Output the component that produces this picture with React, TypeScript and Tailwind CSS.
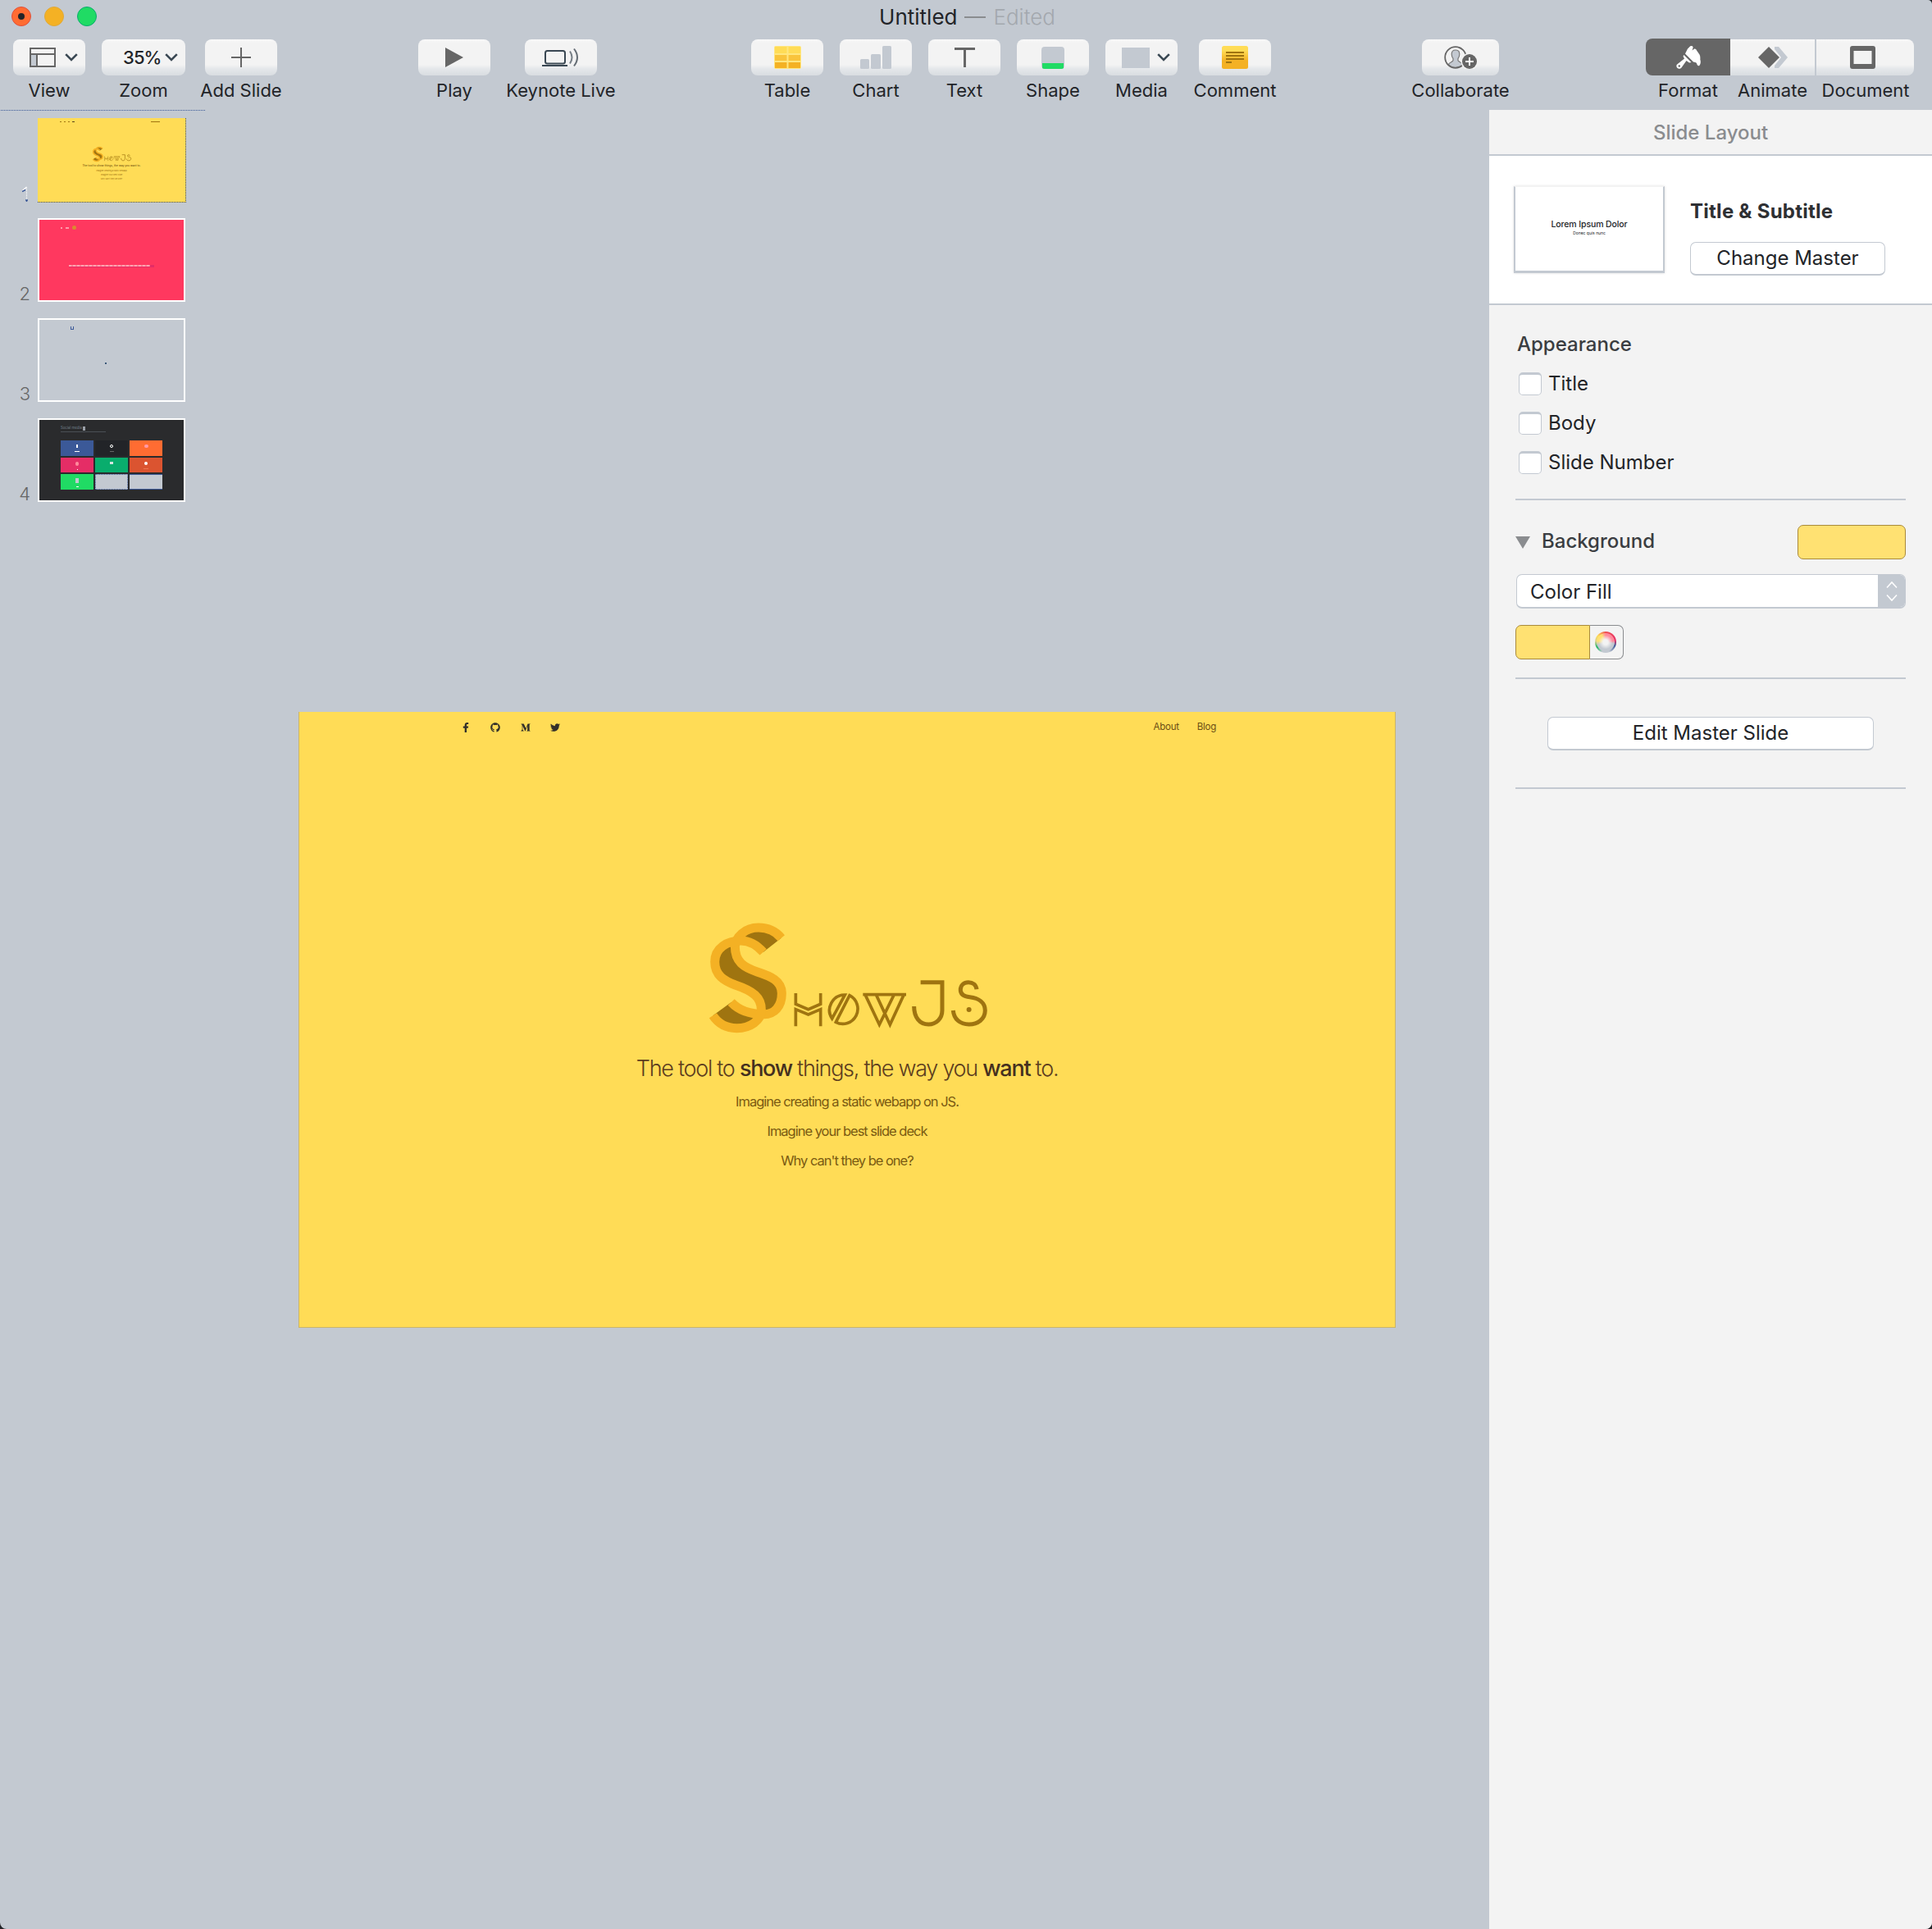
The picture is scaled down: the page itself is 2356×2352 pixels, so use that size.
import React from "react";
import { FaFacebookF, FaGithub, FaMediumM, FaTwitter } from "react-icons/fa";

const face =
  "bg-[linear-gradient(to_bottom,#f9f9f9_0px,#f3f3f3_4px,#f3f3f3_31px,#e4e7ea_36px,#d9dde1_44px)]";

function Tool({
  label,
  box,
  gap,
  children,
}: {
  label: string;
  box: string;
  gap: string;
  children: React.ReactNode;
}) {
  return (
    <div className={`flex shrink-0 flex-col items-center ${box} ${gap}`}>
      <div className={`flex h-11 w-full items-center justify-center rounded-[8px] ${face}`}>{children}</div>
      <div className="mt-1 h-[28px] text-[22px] leading-[28px] whitespace-nowrap text-[#222428]">{label}</div>
    </div>
  );
}

function Caret() {
  return (
    <svg width="16" height="10" viewBox="0 0 16 10" fill="none" stroke="#3a4853" strokeWidth="2.6">
      <path d="M1.2 1.2 8 8l6.8-6.8" />
    </svg>
  );
}

function Toolbar() {
  return (
    <div className="flex h-[94px] pt-2">
      <Tool label="View" box="w-[88px]" gap="ml-4">
        <div className="flex w-full items-center gap-[11px] pl-5">
          <svg width="32" height="24" viewBox="0 0 32 24">
            <rect x="1" y="8" width="8" height="15" fill="#c3c9d1" />
            <path d="M1 1h30v22H1zM1 8h30M9 8v15" fill="none" stroke="#666" strokeWidth="2" />
          </svg>
          <Caret />
        </div>
      </Tool>
      <Tool label="Zoom" box="w-[102px]" gap="ml-5">
        <div className="flex w-full items-center gap-[4px] pl-[26px] text-[22px] font-medium tracking-[-0.900px] text-[#222428]">
          35% <Caret />
        </div>
      </Tool>
      <Tool label="Add Slide" box="w-[88px]" gap="ml-6">
        <svg width="24" height="24" viewBox="0 0 24 24" stroke="#666" strokeWidth="2">
          <path d="M12 0v24M0 12h24" />
        </svg>
      </Tool>
      <Tool label="Play" box="w-[88px]" gap="ml-[172px]">
        <svg width="22" height="24" viewBox="0 0 22 24" fill="#666">
          <path d="M0 0l22 12L0 24z" />
        </svg>
      </Tool>
      <Tool label="Keynote Live" box="w-[88px]" gap="ml-[42px]">
        <svg width="46" height="24" viewBox="0 0 46 24" fill="none" stroke="#3a4853" strokeWidth="2">
          <rect x="4" y="4" width="24" height="15.500" rx="2.500" />
          <path d="M0 22h31" />
          <path d="M34 4.500q5 7.500 0 15" stroke="#777f87" />
          <path d="M39 1.500q8 10.500 0 21" stroke="#666e76" />
        </svg>
      </Tool>
      <Tool label="Table" box="w-[88px]" gap="ml-[188px]">
        <svg width="33" height="28" viewBox="0 0 33 28">
          <rect width="33" height="28" rx="2" fill="#ffe680" />
          <path d="M1 1h14.500v8H1zM17.500 1H32v8H17.500z" fill="#ffdc56" />
          <path d="M1 11h14.500v7H1zM17.500 11H32v7H17.500z" fill="#f9c43c" />
          <path d="M1 20h14.500v7H1zM17.500 20H32v7H17.500z" fill="#f4b124" />
        </svg>
      </Tool>
      <Tool label="Chart" box="w-[88px]" gap="ml-5">
        <svg width="38" height="28" viewBox="0 0 38 28" fill="#c3c9d1">
          <rect x="0" y="16" width="11" height="12" rx="1.500" />
          <rect x="13" y="10" width="12" height="18" rx="1.500" />
          <rect x="27" y="0" width="11" height="28" rx="1.500" />
        </svg>
      </Tool>
      <Tool label="Text" box="w-[88px]" gap="ml-5">
        <svg width="25" height="24" viewBox="0 0 25 24" stroke="#666" strokeWidth="3">
          <path d="M0 1.500h25M12.500 0v24" />
        </svg>
      </Tool>
      <Tool label="Shape" box="w-[88px]" gap="ml-5">
        <div className="flex h-[27px] w-[28px] flex-col justify-end overflow-hidden rounded-[4px] bg-[#c3c9d1] px-px">
          <div className="h-[7px] bg-[#20db64]" />
        </div>
      </Tool>
      <Tool label="Media" box="w-[88px]" gap="ml-5">
        <div className="flex w-full items-center gap-[9px] pl-5">
          <div className="h-[25px] w-[34px] bg-[#c3c9d1]" />
          <Caret />
        </div>
      </Tool>
      <Tool label="Comment" box="w-[88px]" gap="ml-[26px]">
        <svg width="32" height="28" viewBox="0 0 32 28">
          <defs>
            <linearGradient id="note" x1="0" y1="0" x2="0" y2="1">
              <stop offset="0.2" stopColor="#ffdc56" />
              <stop offset="0.65" stopColor="#f4b124" />
            </linearGradient>
          </defs>
          <rect width="32" height="28" rx="2.500" fill="url(#note)" />
          <path d="M5 8h22M5 12h22M5 16h22M5 20h7" stroke="#9f7410" strokeWidth="2" />
        </svg>
      </Tool>
      <Tool label="Collaborate" box="w-[94px]" gap="ml-[184px]">
        <svg width="40" height="28" viewBox="0 0 40 28">
          <path
            d="M14 5c-3 0-4.800 2-4.800 5 0 2.500.8 4 1.800 5.300v2.500C10 20 6 20 5.500 22.500c4 5 13 5 17 0C22 20 18 20 17 17.800v-2.500c1-1.300 1.800-2.800 1.800-5.300 0-3-1.800-5-4.800-5z"
            fill="#c3c9d1"
            stroke="#777"
            strokeWidth="1.200"
          />
          <circle cx="14" cy="14" r="12.800" fill="none" stroke="#666" strokeWidth="1.800" />
          <circle cx="31" cy="19" r="10.500" fill="#f3f3f3" />
          <circle cx="31" cy="19" r="9" fill="#666" />
          <path d="M31 14v10M26 19h10" stroke="#fff" strokeWidth="2" />
        </svg>
      </Tool>
      <div className="ml-[179px] flex">
        <Segment label="Format" box="w-[103px]" look="-mt-px h-[45px] rounded-l-[8px] bg-[#666]">
          <svg width="30" height="28" viewBox="0 0 30 28" fill="#fff">
            <path d="M17 0.500c2-1 4 0 3.500 2l-1 3 2-1.500c1.500-1 3 0 3.500 1.500l3.500 5c1 2 1 4 .8 6 1 3 .5 6-1 7.500-1.500 1-3-1-3.300-3l-1.500-1-2.500-.5L11 9.500c1-2 2-4 3-6z" />
            <path d="M9.500 11l9 9-2.500.5-3.500-2.500-6 8.500C5 28.300 2.500 28 1.300 26.800 0 25.300 0 23 1.800 22L10 15.500 8.500 12.500z" />
            <circle cx="3.800" cy="24.500" r="1.200" fill="#666" />
          </svg>
        </Segment>
        <Segment label="Animate" box="w-[103px]" look={`h-11 ${face}`}>
          <svg width="36" height="28" viewBox="0 0 36 28">
            <path d="M20 1h5l11 13-11 13h-5l0-3 8-10-8-10z" fill="#c3c9d1" />
            <path d="M13 1l13 13-13 13L0 14z" fill="#666" />
          </svg>
        </Segment>
        <Segment
          label="Document"
          box="w-[121px]"
          look={`h-11 rounded-r-[8px] border-l-2 border-[#c3c9d1] pr-[6px] ${face}`}
          shift="pl-[3px]"
        >
          <svg width="31" height="28" viewBox="0 0 31 28">
            <path
              fillRule="evenodd"
              fill="#666"
              d="M3 0h25a3 3 0 0 1 3 3v22a3 3 0 0 1-3 3H3a3 3 0 0 1-3-3V3a3 3 0 0 1 3-3zM4.500 6v16h22V6z"
            />
          </svg>
        </Segment>
      </div>
    </div>
  );
}

function Segment({
  label,
  box,
  look,
  shift = "",
  children,
}: {
  label: string;
  box: string;
  look: string;
  shift?: string;
  children: React.ReactNode;
}) {
  return (
    <div className={`flex flex-col items-center ${box}`}>
      <div className={`flex w-full items-center justify-center ${look}`}>{children}</div>
      <div className={`mt-1 h-[28px] text-[22px] leading-[28px] whitespace-nowrap text-[#222428] ${shift}`}>{label}</div>
    </div>
  );
}

function Logo({ className }: { className: string }) {
  return (
    <svg className={className} viewBox="60 60 1050 430" fill="none">
      <path
        fill="#9f7410"
        d="M272 180C250 155 225 138 190 138 140 138 95 165 95 215 95 265 130 285 170 300 235 322 265 345 265 390 265 430 225 458 175 458 140 458 110 445 88 412L155 363C180 390 215 407 275 407 312 407 340 380 340 330 340 285 300 268 250 252 200 235 169 215 169 160 170 125 205 90 255 90 290 90 315 100 338 128Z"
      />
      <g stroke="#f4b124" strokeWidth="33">
        <path d="M338 128C315 100 290 90 255 90 205 90 170 125 169 160 169 215 200 235 250 252 300 268 340 285 340 330 340 380 312 407 275 407 215 407 180 390 155 363" />
        <path d="M272 180C250 155 225 138 190 138 140 138 95 165 95 215 95 265 130 285 170 300 235 322 265 345 265 390 265 430 225 458 175 458 140 458 110 445 88 412" />
      </g>
      <g stroke="#9f7410" strokeWidth="11">
        <path d="M391 330v40l46 19 45-19v-40M391 451v-62l46 19 45-19v62" />
        <path d="M571 336A56 56 0 0 0 524 423ZM588 338A55 55 0 1 1 538 436Z" />
        <path d="M637 335h158M645 335l52 110 54-110M685 335l51 110 51-110" />
      </g>
      <g stroke="#9f7410" strokeWidth="15">
        <path d="M848 290h79v103c0 30-22 51-50 51-32 0-53-25-53-66" />
        <path d="M1053 316c-2-17-14-26-30-26-17 0-29 11-29 28 0 17 14 24 34 26 34 4 56 21 56 49 0 32-27 51-59 51-33 0-55-19-58-51" />
      </g>
      <circle cx="1025" cy="390" r="9" fill="#9f7410" />
    </svg>
  );
}

function Row({ n, children }: { n: string; children: React.ReactNode }) {
  return (
    <div className="flex h-[102px] items-end">
      <div className="w-[37px] text-right text-[22px] leading-[20px] font-light text-[#666]">{n}</div>
      <div className="ml-[9px] h-[102px] w-[180px]">{children}</div>
    </div>
  );
}

const tiles = [
  { bg: "bg-[#3b5998]", mark: "h-[4px] w-[2px] bg-white", line: "w-[6px] bg-white" },
  { bg: "bg-[#222428]", mark: "h-[4px] w-[4px] rounded-full border border-white", line: "w-[5px] bg-[#666]" },
  { bg: "bg-[#ff6c32]", mark: "h-[4px] w-[5px] rounded-full bg-[#ff9aa8]", line: "w-0" },
  { bg: "bg-[#e52d66]", mark: "h-[5px] w-[4px] rounded-full bg-[#ff8a9c]", line: "w-[1px] bg-white" },
  { bg: "bg-[#09ad6d]", mark: "h-[3px] w-[4px] bg-[#d5e5e0]", line: "w-0" },
  { bg: "bg-[#db5430]", mark: "h-[4px] w-[4px] rounded-full bg-white", line: "w-[6px] bg-[#ee7550]" },
  { bg: "bg-[#20db64]", mark: "h-[6px] w-[4px] bg-[#c3c9d1]", line: "w-[3px] bg-white" },
  { bg: "bg-[#c3c9d1] border border-dotted border-[#3b5998]", mark: "", line: "w-0" },
  { bg: "bg-[#c3c9d1] border-y border-[#3b5998]", mark: "", line: "w-0" },
];

function Sidebar() {
  return (
    <div className="w-[250px] shrink-0">
      <div className="h-px bg-[repeating-linear-gradient(90deg,transparent_0px,transparent_1px,#3b5998_1px,#3b5998_2px)]" />
      <div className="flex flex-col gap-5 pt-[9px]">
        <div className="flex h-[102px] items-end">
          <div className="flex w-[37px] flex-col items-end pr-[3px]">
            <svg width="7" height="19" viewBox="0 0 7 19" fill="none">
              <path d="M0.500 5.500L5.500 1" stroke="#fff" strokeWidth="1.500" />
              <path d="M5.500 1v15" stroke="#fff" strokeWidth="1.200" strokeDasharray="1 1" />
              <path d="M0 6.500l4-2M4 17h3M5.500 17v2" stroke="#3b5998" strokeWidth="1.500" />
            </svg>
          </div>
          <div className="ml-[9px] flex h-[103px] w-[181px] translate-y-px flex-col items-center border-r border-b border-dotted border-[#34466e] bg-[#ffdc56]">
            <div className="flex w-full justify-between pt-1 pr-[31px] pl-[27px]">
              <div className="flex gap-[3px]">
                <i className="h-px w-[2px] bg-[#9f7410]" />
                <i className="h-px w-[2px] bg-[#9f7410]" />
                <i className="h-px w-[2px] bg-[#9f7410]" />
                <i className="h-px w-[3px] bg-[#5a431b]" />
              </div>
              <i className="h-px w-[11px] bg-[#9f7410]" />
            </div>
            <Logo className="mt-[29px] h-[20px] w-[49px]" />
            <div className="mt-[2px] flex flex-col items-center">
              <span className="h-[6px] text-[3.300px] leading-[5px] font-medium whitespace-nowrap text-[#7a5a12]">
                The tool to show things, the way you want to.
              </span>
              <span className="h-[5px] text-[2.400px] leading-[5px] text-[#9f7410]">Imagine creating a static webapp</span>
              <span className="h-[5px] text-[2.400px] leading-[5px] text-[#9f7410]">Imagine your best slide</span>
              <span className="h-[5px] text-[2.400px] leading-[5px] text-[#9f7410]">Why can't they be one?</span>
            </div>
          </div>
        </div>
        <Row n="2">
          <div className="flex h-full flex-col items-center border-2 border-white bg-[#ff385f]">
            <div className="mt-[7px] flex w-full items-center gap-[4px] pl-[26px]">
              <i className="h-[2px] w-[2px] bg-[#ff9aa8]" />
              <i className="h-[2px] w-[4px] bg-[#ff9aa8]" />
              <i className="h-[5px] w-[5px] rounded-full bg-[#db8a30]" />
            </div>
            <div className="mt-[43px] h-[3px] w-[104px] bg-[#e52d66]">
              <div className="h-[2px] w-[99px] bg-[repeating-linear-gradient(90deg,#ffa5b0_0px,#ffa5b0_3px,#ff7f93_3px,#ff7f93_5px)]" />
            </div>
          </div>
        </Row>
        <Row n="3">
          <div className="h-full border-2 border-white">
            <div className="mt-[8px] ml-[38px] h-[4px] w-[4px] border-r border-b border-l border-[#3b5998]" />
            <div className="mt-[40px] ml-[80px] h-[2px] w-[2px] bg-[#3a5878]" />
          </div>
        </Row>
        <Row n="4">
          <div className="h-full border-2 border-white bg-[#2a2b2d] pl-[26px]">
            <div className="h-[25px] pt-[7px]">
              <div className="flex h-[6px] items-center gap-px text-[4.300px] leading-[6px] text-[#78838d]">
                Social media
                <i className="h-[5px] w-[3px] bg-[#9aa0a8]" />
              </div>
              <div className="mt-px h-px w-[55px] bg-[#4a4f55]" />
            </div>
            <div className="grid w-[124px] grid-cols-3 gap-x-[2px] gap-y-[2px]">
              {tiles.map((t, i) => (
                <div key={i} className={`flex h-[18.500px] flex-col items-center pt-[5px] ${t.bg}`}>
                  <div className={t.mark} />
                  <div className={`mt-[4px] h-px ${t.line}`} />
                </div>
              ))}
            </div>
          </div>
        </Row>
      </div>
    </div>
  );
}

function Slide() {
  return (
    <div className="mt-[734px] ml-[114px] flex h-[751px] w-[1338px] flex-col items-center border-r border-b border-l border-[#c9b46a] bg-[#ffdc56]">
      <div className="flex h-[37px] w-full items-center justify-between pr-[218px] pl-[197px]">
        <div className="flex gap-[24.300px] text-[12px] text-[#33302a]">
          <FaFacebookF />
          <FaGithub />
          <FaMediumM />
          <FaTwitter />
        </div>
        <div className="flex gap-[22px] pt-px text-[11.500px] tracking-[-0.250px] text-[#6b4d14]">
          <span>About</span>
          <span>Blog</span>
        </div>
      </div>
      <Logo className="mt-[216px] ml-[3px] h-[143.300px] w-[350px]" />
      <div className="mt-[17px] flex flex-col items-center">
        <div className="h-[44px] text-[27px] leading-[44px] font-light tracking-[-1.280px] whitespace-nowrap text-[#5c3d1e]">
          The tool to <b className="font-medium text-[#45301f]">show</b> things, the way you{" "}
          <b className="font-medium text-[#45301f]">want</b> to.
        </div>
        <div className="text-center text-[16.500px] leading-[36px] tracking-[-1.020px] text-[#7a5a12]">
          <p>Imagine creating a static webapp on JS.</p>
          <p>Imagine your best slide deck</p>
          <p>Why can't they be one?</p>
        </div>
      </div>
    </div>
  );
}

function Check({ label }: { label: string }) {
  return (
    <label className="flex h-12 items-center gap-[8px] pl-1 text-[24px] leading-[28px] text-[#222428]">
      <span className="h-7 w-7 rounded-[5px] border border-t-[3px] border-[#c3c9d1] bg-white" />
      {label}
    </label>
  );
}

function Inspector() {
  return (
    <div className="flex w-[540px] shrink-0 flex-col bg-[#f3f3f3] text-[24px] text-[#222428]">
      <div className="flex h-[54px] items-center justify-center pt-[2px] text-[24px] font-medium text-[#8a8c8f]">
        Slide Layout
      </div>
      <div className="flex h-[184px] border-y-2 border-[#c3c9d1] bg-white pl-[30px]">
        <div className="mt-[37px] flex h-[106px] w-[184px] flex-col items-center border-x-2 border-t border-b-[3px] border-t-[#f3f3f3] border-r-[#c3c9d1] border-b-[#c3c9d1] border-l-[#c3c9d1] bg-white pt-[39px] shadow-[0_0_3px_#ddd]">
          <div className="text-[10.500px] leading-[14px] font-medium tracking-[-0.100px]">Lorem Ipsum Dolor</div>
          <div className="text-[5px] leading-[7px]">Donec quis nunc</div>
        </div>
        <div className="ml-[31px] flex flex-col pt-[52px]">
          <div className="h-[32px] text-[24px] leading-[32px] font-bold tracking-[0.250px] text-[#2e3033]">
            Title &amp; Subtitle
          </div>
          <button className="mt-[21px] h-[41px] w-[238px] rounded-[7px] border border-b-2 border-[#c3c9d1] bg-white text-[24px] leading-[38px]">
            Change Master
          </button>
        </div>
      </div>
      <div className="flex flex-col pr-8 pl-8">
        <div className="mt-[32px] h-[32px] pl-[2px] leading-[32px] font-medium text-[#3a3d41]">Appearance</div>
        <div className="mt-[8px]">
          <Check label="Title" />
          <Check label="Body" />
          <Check label="Slide Number" />
        </div>
        <div className="mt-[20px] h-[2px] bg-[#c3c9d1]" />
        <div className="mt-[30px] flex h-[42px] items-center">
          <svg width="18" height="15" viewBox="0 0 18 15" fill="#8a8c8f">
            <path d="M0 0h18L9 15z" />
          </svg>
          <span className="-mt-[3px] ml-[14px] font-medium text-[#3a3d41]">Background</span>
          <div className="ml-auto h-[42px] w-[132px] rounded-[7px] border border-[#a98a3c] bg-[#ffe172]" />
        </div>
        <div className="mt-[18px] ml-px flex h-[42px] overflow-hidden rounded-[7px] border border-b-2 border-[#c3c9d1] bg-white">
          <div className="flex-1 pl-[16px] leading-[41px]">Color Fill</div>
          <div className="flex w-[33px] items-center justify-center bg-[#c3c9d1]">
            <svg width="14" height="26" viewBox="0 0 14 26" fill="none" stroke="#fff" strokeWidth="1.600">
              <path d="M1 8.500L7 2l6 6.500M1 17.500L7 24l6-6.500" />
            </svg>
          </div>
        </div>
        <div className="mt-[20px] flex h-[42px] w-[132px]">
          <div className="w-[91px] rounded-l-[7px] border border-[#a98a3c] bg-[#ffe172]" />
          <div className="flex flex-1 items-center justify-center rounded-r-[7px] border border-l-0 border-[#8a8c8f] pr-[2px]">
            <div className="flex h-[26px] w-[26px] items-center justify-center rounded-full bg-[conic-gradient(#f0504f,#e52d66_80deg,#3b5998_110deg,#c3c9d1_160deg,#c3c9d1_200deg,#20b564_240deg,#d8d090_275deg,#ffdc56_310deg,#f0504f)]">
              <div className="h-[22px] w-[22px] rounded-full bg-[radial-gradient(circle,#f3f3f3_20%,transparent_55%),conic-gradient(#ff8a9c,#ff8a9c_80deg,#c3c9d1_100deg,#c3c9d1_250deg,#ffe172_280deg,#ffe172_330deg,#ff8a9c)]" />
            </div>
          </div>
        </div>
        <div className="mt-[22px] h-[2px] bg-[#c3c9d1]" />
        <button className="mt-[46px] ml-[39px] h-[41px] w-[398px] rounded-[7px] border border-b-2 border-[#c3c9d1] bg-white leading-[38px]">
          Edit Master Slide
        </button>
        <div className="mt-[45px] h-[2px] bg-[#c3c9d1]" />
      </div>
    </div>
  );
}

export default function App() {
  return (
    <div className="h-[2352px] w-[2356px] bg-[#222428]">
      <div className="flex h-full w-full flex-col overflow-hidden rounded-tr-[5px] rounded-b-[8px] bg-[#c3c9d1] font-['Inter',sans-serif]">
        <div className="relative flex h-10 items-center justify-center">
          <div className="absolute top-2 left-[14px] flex gap-4">
            <div className="flex h-6 w-6 items-center justify-center rounded-full border border-[#e0503c] bg-[#ff6c32]">
              <div className="h-2 w-2 rounded-full bg-[#222428]" />
            </div>
            <div className="h-6 w-6 rounded-full border border-[#dfa93a] bg-[#f4b124]" />
            <div className="h-6 w-6 rounded-full border border-[#09ad6d] bg-[#20db64]" />
          </div>
          <div className="flex items-center gap-[9px] pt-[2px] pl-[3px] text-[26px] leading-[40px] text-[#222428]">
            Untitled <i className="h-[2px] w-[26px] bg-[#8a8c8f]" />
            <span className="font-light text-[#a3a8ae]">Edited</span>
          </div>
        </div>
        <Toolbar />
        <div className="flex flex-1">
          <Sidebar />
          <div className="flex-1">
            <Slide />
          </div>
          <Inspector />
        </div>
      </div>
    </div>
  );
}
